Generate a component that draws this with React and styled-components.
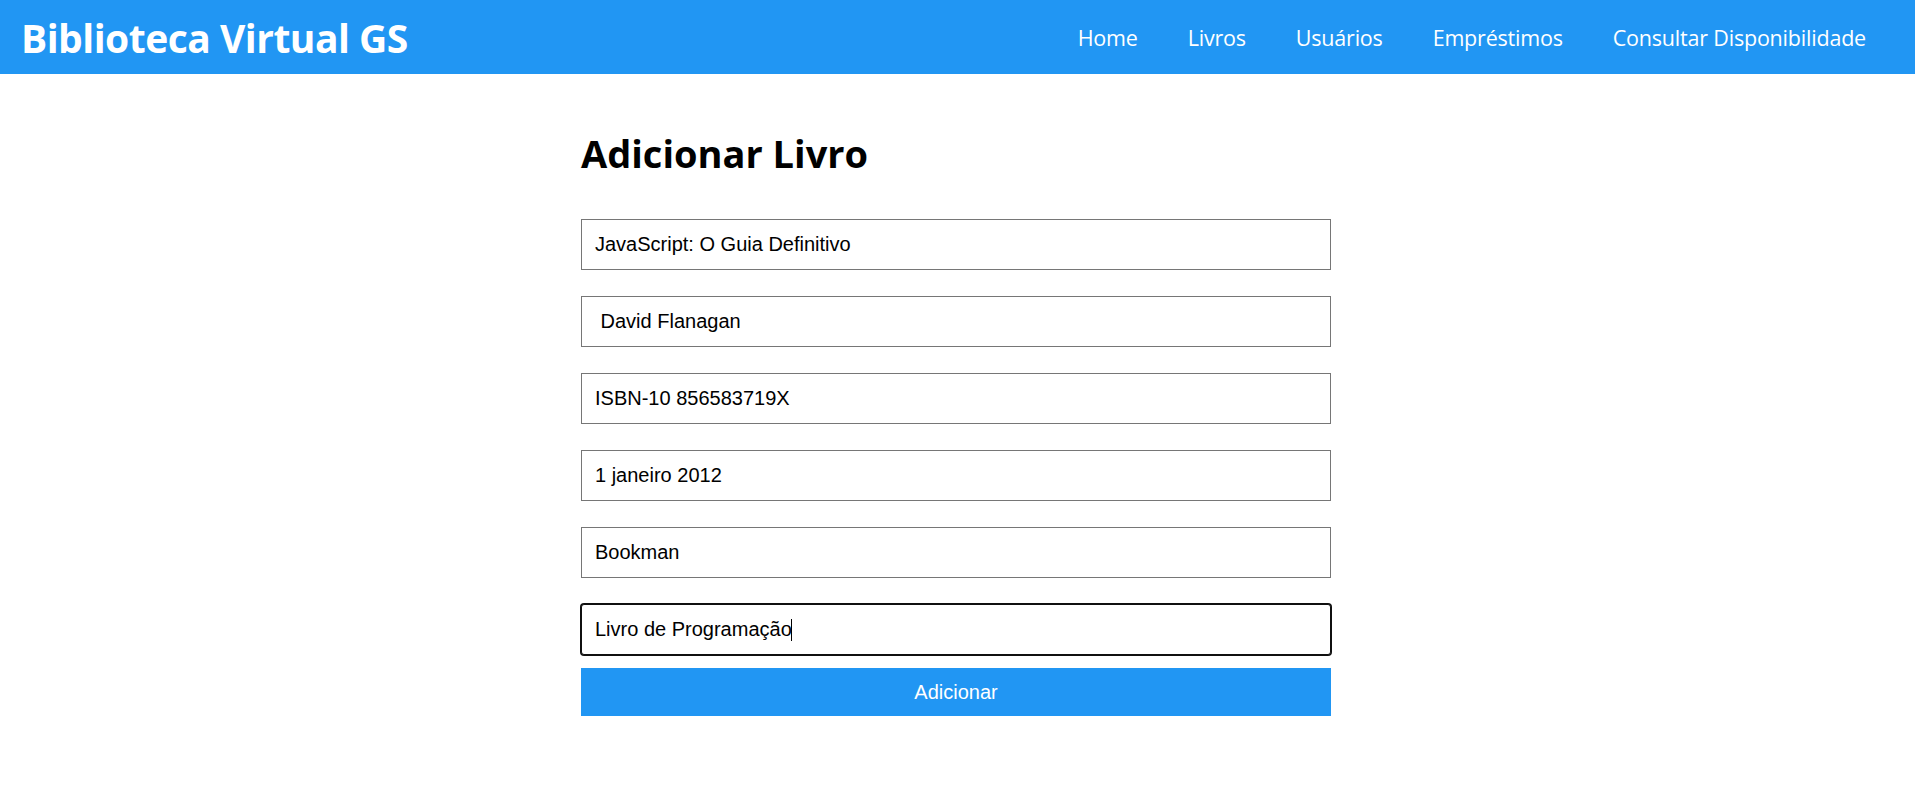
import React, { useState } from "react";
import styled, { createGlobalStyle } from "styled-components";

const GlobalStyle = createGlobalStyle`
  body {
    margin: 0;
    background: #ffffff;
    font-family: "Open Sans", "Noto Sans", sans-serif;
  }
`;

const Header = styled.header`
  height: 74px;
  background-color: #2196f3;
  display: flex;
  align-items: center;
  justify-content: space-between;
  padding: 0 24px 0 21px;
  color: #ffffff;
`;
const Brand = styled.h1`
  margin: 0;
  font-size: 39px;
  font-weight: 700;
  line-height: 1;
  letter-spacing: -0.5px;
`;
const Nav = styled.nav`
  display: flex;
  align-items: center;
`;
const NavLink = styled.a`
  color: #ffffff;
  text-decoration: none;
  font-size: 21.5px;
  padding: 0 25px;
  letter-spacing: -0.2px;
  cursor: pointer;
`;

const Main = styled.main`
  width: 750px;
  margin: 0 auto;
  padding: 60px 3px 0 0;
`;
const Title = styled.h2`
  margin: 0 0 34px;
  font-size: 38px;
  font-weight: 700;
  line-height: 1;
  color: #000000;
`;
const Form = styled.form`
  display: flex;
  flex-direction: column;
`;
const FieldWrap = styled.div`
  position: relative;
  margin: 13px 0;
`;
const Input = styled.input`
  display: block;
  width: 100%;
  box-sizing: border-box;
  padding: 13px;
  font-family: "Liberation Sans", Arial, sans-serif;
  font-size: 20px;
  color: #000000;
  background: #ffffff;
  border: 1px solid ${(p) => (p.$active ? "#101010" : "#767676")};
  border-radius: ${(p) => (p.$active ? "3px" : "0")};
  box-shadow: ${(p) => (p.$active ? "0 0 0 1px #101010" : "none")};
  outline: none;
`;
const Caret = styled.span`
  position: absolute;
  left: 210px;
  top: 15px;
  width: 1px;
  height: 22px;
  background: #000000;
`;
const SubmitButton = styled.button`
  padding: 12.5px;
  border: none;
  border-radius: 0;
  background-color: #2196f3;
  color: #ffffff;
  font-family: "Liberation Sans", Arial, sans-serif;
  font-size: 20px;
  cursor: pointer;
`;

const links = ["Home", "Livros", "Usuários", "Empréstimos", "Consultar Disponibilidade"];

export default function App() {
  const [fields, setFields] = useState([
    "JavaScript: O Guia Definitivo",
    " David Flanagan",
    "ISBN-10 856583719X",
    "1 janeiro 2012",
    "Bookman",
    "Livro de Programação",
  ]);

  const handleChange = (i, value) => {
    const next = [...fields];
    next[i] = value;
    setFields(next);
  };

  return (
    <>
      <GlobalStyle />
      <Header>
        <Brand>Biblioteca Virtual GS</Brand>
        <Nav>
          {links.map((l) => (
            <NavLink key={l}>{l}</NavLink>
          ))}
        </Nav>
      </Header>
      <Main>
        <Title>Adicionar Livro</Title>
        <Form onSubmit={(e) => e.preventDefault()}>
          {fields.map((f, i) => {
            const last = i === fields.length - 1;
            return (
              <FieldWrap key={i}>
                <Input
                  $active={last}
                  value={f}
                  onChange={(e) => handleChange(i, e.target.value)}
                />
                {last && <Caret />}
              </FieldWrap>
            );
          })}
          <SubmitButton type="submit">Adicionar</SubmitButton>
        </Form>
      </Main>
    </>
  );
}
